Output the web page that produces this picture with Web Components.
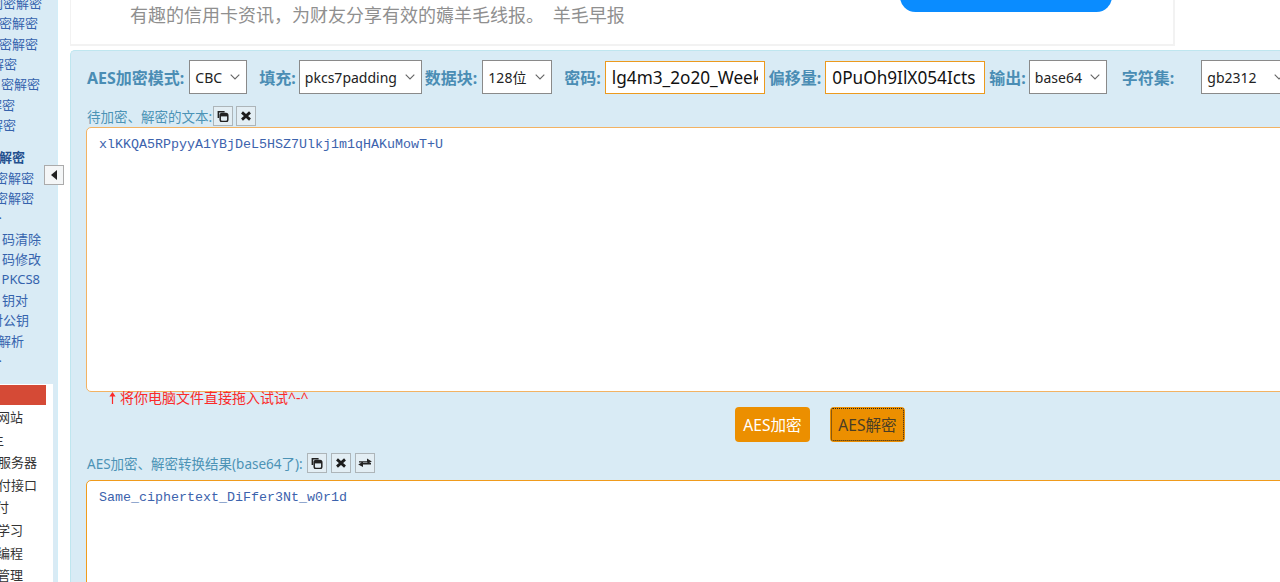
<!DOCTYPE html>
<html lang="zh-CN">
<head>
<meta charset="utf-8">
<title>AES加密解密</title>
<style>
  html, body { margin: 0; height: 582px; overflow: hidden; background: #fff; }
  body { font-family: "Noto Sans", "Noto Sans CJK SC", sans-serif; }
</style>
</head>
<body>
<app-page>
  <side-nav slot="nav">
    <nav-row end="42">闰密解密</nav-row>
    <nav-row end="38">密解密</nav-row>
    <nav-row end="38">密解密</nav-row>
    <nav-row end="17">解密</nav-row>
    <nav-row end="40">密解密</nav-row>
    <nav-row end="15">解密</nav-row>
    <nav-row end="16">解密</nav-row>
    <nav-row end="25" head>解密</nav-row>
    <nav-row end="34">密解密</nav-row>
    <nav-row end="34">密解密</nav-row>
    <nav-row end="2">·</nav-row>
    <nav-row end="41">码清除</nav-row>
    <nav-row end="41">码修改</nav-row>
    <nav-row end="40">PKCS8</nav-row>
    <nav-row end="28">钥对</nav-row>
    <nav-row end="29">对公钥</nav-row>
    <nav-row end="24">解析</nav-row>
    <nav-row end="2">·</nav-row>
    <nav-row slot="lower" end="23" plain>网站</nav-row>
    <nav-row slot="lower" end="4" plain>主</nav-row>
    <nav-row slot="lower" end="37" plain>服务器</nav-row>
    <nav-row slot="lower" end="37" plain>付接口</nav-row>
    <nav-row slot="lower" end="9" plain>付</nav-row>
    <nav-row slot="lower" end="23" plain>学习</nav-row>
    <nav-row slot="lower" end="23" plain>编程</nav-row>
    <nav-row slot="lower" end="23" plain>管理</nav-row>
  </side-nav>
  <promo-card>有趣的信用卡资讯&#xFF0C;为财友分享有效的薅羊毛线报。 羊毛早报</promo-card>
  <aes-panel>
    <tool-bar>
      <aes-label>AES加密模式:</aes-label>
      <aes-select width="58" gap="5">CBC</aes-select>
      <aes-label gap="12">填充:</aes-label>
      <aes-select width="123" gap="3">pkcs7padding</aes-select>
      <aes-label gap="3">数据块:</aes-label>
      <aes-select width="70" gap="5">128位</aes-select>
      <aes-label gap="12">密码:</aes-label>
      <aes-input gap="4">lg4m3_2o20_Week1</aes-input>
      <aes-label gap="4">偏移量:</aes-label>
      <aes-input gap="4">0PuOh9IlX054Icts</aes-input>
      <aes-label gap="4">输出:</aes-label>
      <aes-select width="78" gap="3">base64</aes-select>
      <aes-label gap="15">字符集:</aes-label>
      <aes-select width="90" gap="27">gb2312</aes-select>
    </tool-bar>
    <box-label top="12">
      待加密、解密的文本:
      <icon-btn kind="copy" gap="1"></icon-btn>
      <icon-btn kind="clear" gap="3"></icon-btn>
    </box-label>
    <text-box height="265" top="1" tone="#f2b263">xlKKQA5RPpyyA1YBjDeL5HSZ7Ulkj1m1qHAKuMowT+U</text-box>
    <drop-hint>将你电脑文件直接拖入试试^-^</drop-hint>
    <action-row>
      <aes-btn>AES加密</aes-btn>
      <aes-btn focused>AES解密</aes-btn>
    </action-row>
    <box-label top="11">
      AES加密、解密转换结果(base64了):
      <icon-btn kind="copy" gap="4"></icon-btn>
      <icon-btn kind="clear" gap="4"></icon-btn>
      <icon-btn kind="swap" gap="4"></icon-btn>
    </box-label>
    <text-box height="262" top="7" tone="#f09b1c">Same_ciphertext_DiFfer3Nt_w0r1d</text-box>
  </aes-panel>
</app-page>

<script>
// Page frame: the clipped nav on the left, the promo card and the tool on the right.
class AppPage extends HTMLElement {
  constructor() {
    super();
    this.attachShadow({ mode: 'open' }).innerHTML = `
      <style>
        :host { display: flex; height: 582px; overflow: hidden; }
        main { flex: 1; min-width: 0; margin-left: 12px; }
      </style>
      <slot name="nav"></slot>
      <main><slot></slot></main>
    `;
  }
}

class SideNav extends HTMLElement {
  constructor() {
    super();
    this.attachShadow({ mode: 'open' }).innerHTML = `
      <style>
        :host {
          display: block;
          position: relative;
          flex: none;
          width: 58px;
          height: 582px;
          box-sizing: border-box;
          background: #d9ebf5;
          border-right: 1px solid #d3eef8;
        }
        .clip { height: 100%; overflow: hidden; }
        .upper { height: 391.2px; margin-top: -7.2px; }
        ::slotted(nav-row:nth-child(8)) { margin-top: 11.6px; }
        .lower { background: #fff; width: 53px; height: 198px; padding-top: 1px; }
        .red { width: 46px; height: 20px; background: #d54a36; margin-bottom: 1px; }
      </style>
      <div class="clip">
        <div class="upper"><slot></slot></div>
        <div class="lower">
          <div class="red"></div>
          <slot name="lower"></slot>
        </div>
      </div>
      <fold-btn></fold-btn>
    `;
  }
}

// Collapse handle that sits over the edge of the nav.
class FoldBtn extends HTMLElement {
  constructor() {
    super();
    this.attachShadow({ mode: 'open' }).innerHTML = `
      <style>
        :host {
          position: absolute;
          left: 44px;
          top: 165px;
          width: 20px;
          height: 20px;
          box-sizing: border-box;
          background: #f4f6f7;
          border: 1px solid #ababab;
          display: flex;
          align-items: center;
          justify-content: center;
        }
      </style>
      <svg width="6" height="10" viewBox="0 0 6 10"><path d="M6 0v10L0 5z" fill="#222"/></svg>
    `;
  }
}

// One nav line. The reference is scrolled sideways, so each line is pinned by
// where its text ends and whatever does not fit runs off the left edge.
class NavRow extends HTMLElement {
  constructor() {
    super();
    this.attachShadow({ mode: 'open' }).innerHTML = `
      <style>
        :host {
          display: flex;
          justify-content: flex-end;
          white-space: nowrap;
          height: 20.4px;
          line-height: 20.4px;
          font-size: 13px;
          color: #3563ad;
        }
        :host([head]) { font-weight: 700; color: #23508f; }
        :host([plain]) { height: 22.6px; line-height: 22.6px; color: #333; }
      </style>
      <slot></slot>
    `;
  }
  connectedCallback() {
    this.style.width = this.getAttribute('end') + 'px';
  }
}

class PromoCard extends HTMLElement {
  constructor() {
    super();
    this.attachShadow({ mode: 'open' }).innerHTML = `
      <style>
        :host {
          display: flex;
          justify-content: space-between;
          width: 1105px;
          height: 46px;
          box-sizing: border-box;
          background: #fff;
          border: solid #f2f2f2;
          border-width: 0 2px 2px 1px;
          overflow: hidden;
        }
        p {
          margin: 0 0 0 59px;
          padding-top: 3px;
          font-size: 18px;
          line-height: 24px;
          word-spacing: 4px;
          color: #8f8f8f;
          white-space: nowrap;
        }
        a {
          flex: none;
          display: block;
          width: 212px;
          height: 31px;
          box-sizing: border-box;
          margin: -19px 61px 0 0;
          padding-top: 1px;
          border-radius: 18px;
          background: #0a8cff;
          color: #fff;
          font-size: 16px;
          line-height: 21px;
          text-align: center;
        }
      </style>
      <p><slot></slot></p>
      <a>订阅</a>
    `;
  }
}

class AesPanel extends HTMLElement {
  constructor() {
    super();
    this.attachShadow({ mode: 'open' }).innerHTML = `
      <style>
        :host {
          display: block;
          margin-top: 4px;
          height: 560px;
          box-sizing: border-box;
          padding: 9px 0 0 15px;
          background: #d9ebf5;
          border: solid #bfe6ef;
          border-width: 1px 0 0 1px;
          border-radius: 5px 0 0 0;
        }
      </style>
      <slot></slot>
    `;
  }
}

class ToolBar extends HTMLElement {
  constructor() {
    super();
    this.attachShadow({ mode: 'open' }).innerHTML = `
      <style>
        :host {
          display: flex;
          align-items: center;
          height: 34px;
          width: 1300px;
          padding-left: 1px;
        }
      </style>
      <slot></slot>
    `;
  }
}

class AesLabel extends HTMLElement {
  constructor() {
    super();
    this.attachShadow({ mode: 'open' }).innerHTML = `
      <style>
        :host {
          display: block;
          flex: none;
          font-size: 16px;
          font-weight: 700;
          color: #4a8db4;
          white-space: nowrap;
        }
      </style>
      <slot></slot>
    `;
  }
  connectedCallback() {
    this.style.marginLeft = (this.getAttribute('gap') || 0) + 'px';
  }
}

class AesSelect extends HTMLElement {
  constructor() {
    super();
    this.attachShadow({ mode: 'open' }).innerHTML = `
      <style>
        :host {
          display: flex;
          flex: none;
          align-items: center;
          justify-content: space-between;
          height: 34px;
          box-sizing: border-box;
          padding: 0 6px 0 5px;
          background: #fff;
          border: 1px solid #8a8a8a;
          font-size: 14px;
          color: #222;
        }
      </style>
      <slot></slot>
      <svg width="10" height="6" viewBox="0 0 10 6"><path d="M.7.7 5 5 9.3.7" fill="none" stroke="#666" stroke-width="1.1"/></svg>
    `;
  }
  connectedCallback() {
    this.style.width = this.getAttribute('width') + 'px';
    this.style.marginLeft = this.getAttribute('gap') + 'px';
  }
}

class AesInput extends HTMLElement {
  constructor() {
    super();
    this.attachShadow({ mode: 'open' }).innerHTML = `
      <style>
        :host {
          display: block;
          flex: none;
          width: 160px;
          height: 33px;
          box-sizing: border-box;
          padding: 0 6px;
          background: #fff;
          border: 1px solid #ec9a1e;
          font-size: 17.2px;
          line-height: 31px;
          color: #111;
        }
        div { overflow: hidden; white-space: nowrap; }
      </style>
      <div><slot></slot></div>
    `;
  }
  connectedCallback() {
    this.style.marginLeft = this.getAttribute('gap') + 'px';
  }
}

class BoxLabel extends HTMLElement {
  constructor() {
    super();
    this.attachShadow({ mode: 'open' }).innerHTML = `
      <style>
        :host {
          display: flex;
          align-items: center;
          height: 20px;
          padding-left: 1px;
          font-size: 13.5px;
          color: #4c93b6;
          white-space: nowrap;
        }
      </style>
      <slot></slot>
    `;
  }
  connectedCallback() {
    this.style.marginTop = this.getAttribute('top') + 'px';
  }
}

// Small toolbar button; the kind attribute picks the glyph.
const ICON_PATHS = {
  copy: '<path d="M1.6 1h7v1.6H3.2V8H1.6z" fill="#222"/><rect x="4.2" y="3.6" width="7.6" height="8" rx="1.8" fill="none" stroke="#222" stroke-width="1.5"/><path d="M4 4h8v2.4H4z" fill="#222"/>',
  clear: '<path d="M3 2.4 11 9.6M11 2.4 3 9.6" fill="none" stroke="#1c1c1c" stroke-width="2.8"/>',
  swap: '<path d="M1 4.2h8V1.4l4.8 3.2L9.4 7V5.6H1z M13 7.4H5v2.6L.2 7.6 5 4.8v1.2h8z" fill="#222"/>',
};

class IconBtn extends HTMLElement {
  constructor() {
    super();
    this.attachShadow({ mode: 'open' }).innerHTML = `
      <style>
        :host {
          display: flex;
          flex: none;
          align-items: center;
          justify-content: center;
          width: 20px;
          height: 20px;
          box-sizing: border-box;
          background: #e3eef4;
          border: 1px solid #adb5b9;
        }
      </style>
      <svg width="14" height="12" viewBox="0 0 14 12"></svg>
    `;
  }
  connectedCallback() {
    this.shadowRoot.querySelector('svg').innerHTML = ICON_PATHS[this.getAttribute('kind')];
    this.style.marginLeft = (this.getAttribute('gap') || 0) + 'px';
  }
}

class TextBox extends HTMLElement {
  constructor() {
    super();
    this.attachShadow({ mode: 'open' }).innerHTML = `
      <style>
        :host {
          display: block;
          width: 1300px;
          box-sizing: border-box;
          padding: 8px 12px;
          background: #fff;
          border: 1px solid #f2b263;
          border-radius: 5px;
          font-family: "Liberation Mono", monospace;
          font-size: 13.33px;
          line-height: 17px;
          color: #3c63ad;
          white-space: nowrap;
        }
      </style>
      <slot></slot>
    `;
  }
  connectedCallback() {
    this.style.height = this.getAttribute('height') + 'px';
    this.style.marginTop = this.getAttribute('top') + 'px';
    this.style.borderColor = this.getAttribute('tone');
  }
}

class DropHint extends HTMLElement {
  constructor() {
    super();
    this.attachShadow({ mode: 'open' }).innerHTML = `
      <style>
        :host {
          display: flex;
          align-items: center;
          height: 13px;
          margin-top: -1px;
          padding-left: 22px;
          font-size: 14px;
          line-height: 13px;
          color: #fb2a2a;
          white-space: nowrap;
        }
        svg { margin-right: 3px; }
      </style>
      <svg width="9" height="12" viewBox="0 0 9 12"><path d="M4.5 0 7.6 4.6H5.1V12H3.9V4.6H1.4z" fill="#fb2a2a"/></svg>
      <slot></slot>
    `;
  }
}

class ActionRow extends HTMLElement {
  constructor() {
    super();
    this.attachShadow({ mode: 'open' }).innerHTML = `
      <style>
        :host {
          display: flex;
          gap: 20px;
          height: 35px;
          margin-top: 3px;
          padding-left: 649px;
        }
      </style>
      <slot></slot>
    `;
  }
}

class AesBtn extends HTMLElement {
  constructor() {
    super();
    this.attachShadow({ mode: 'open' }).innerHTML = `
      <style>
        :host {
          display: flex;
          position: relative;
          align-items: center;
          justify-content: center;
          width: 75px;
          height: 35px;
          box-sizing: border-box;
          border-radius: 4px;
          background: #ec8f00;
          color: #fff;
          font-size: 15.6px;
          white-space: nowrap;
        }
        :host([focused]) { color: #4a3d26; }
        :host([focused])::after {
          content: "";
          position: absolute;
          inset: 1px;
          border: 1px dotted #222;
          border-radius: 2px;
        }
      </style>
      <slot></slot>
    `;
  }
}

customElements.define('app-page', AppPage);
customElements.define('side-nav', SideNav);
customElements.define('fold-btn', FoldBtn);
customElements.define('nav-row', NavRow);
customElements.define('promo-card', PromoCard);
customElements.define('aes-panel', AesPanel);
customElements.define('tool-bar', ToolBar);
customElements.define('aes-label', AesLabel);
customElements.define('aes-select', AesSelect);
customElements.define('aes-input', AesInput);
customElements.define('box-label', BoxLabel);
customElements.define('icon-btn', IconBtn);
customElements.define('text-box', TextBox);
customElements.define('drop-hint', DropHint);
customElements.define('action-row', ActionRow);
customElements.define('aes-btn', AesBtn);
</script>
</body>
</html>
